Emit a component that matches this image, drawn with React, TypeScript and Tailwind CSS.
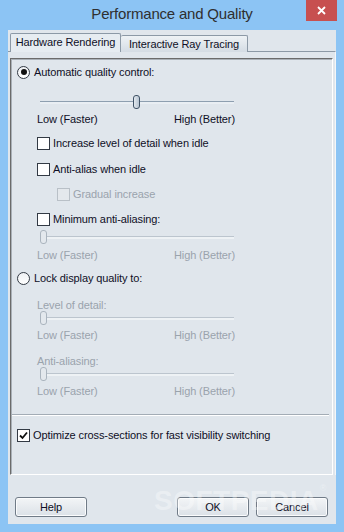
import React from 'react';

const TEXT = 'text-[#0f0f26]';
const DIM = 'text-[#9aa3ac]';

const Radio = ({ checked, label }: { checked?: boolean; label: string }) => (
  <div className="ml-[6px] flex h-[14px] items-center">
    <span className="flex h-[13px] w-[13px] items-center justify-center rounded-full border border-[#333a44] bg-gradient-to-b from-[#eef1f4] to-white">
      {checked && <span className="h-[6px] w-[6px] rounded-full bg-[#111]" />}
    </span>
    <span className={`ml-[4px] ${TEXT}`}>{label}</span>
  </div>
);

const Check = ({
  label,
  checked,
  disabled,
  indent,
}: {
  label: string;
  checked?: boolean;
  disabled?: boolean;
  indent: string;
}) => (
  <div className={`flex h-[14px] items-center ${indent}`}>
    <span
      className={`flex h-[13px] w-[13px] items-center justify-center border ${
        disabled ? 'border-[#b9c0c7] bg-[#e4e8ec]' : 'border-[#333a44] bg-white'
      }`}
    >
      {checked && (
        <svg width="9" height="9" viewBox="0 0 9 9">
          <path d="M1 4.5 L3.5 7 L8 1.5" fill="none" stroke="#111" strokeWidth="1.8" />
        </svg>
      )}
    </span>
    <span className={`ml-[3px] ${disabled ? DIM : TEXT}`}>{label}</span>
  </div>
);

const Slider = ({ pos, disabled }: { pos: number; disabled?: boolean }) => (
  <div className="relative ml-[29px] flex h-[12px] w-[194px] items-center">
    <div
      className={`h-[3px] w-full border-t ${
        disabled ? 'border-[#bcc5ce] bg-[#eef2f5]' : 'border-[#8e9fb0] bg-[#e9eef3]'
      }`}
    />
    <div
      className={`absolute top-[-1px] h-[14px] w-[7px] rounded-[3px] border ${
        disabled
          ? 'border-[#aab4be] bg-[#e3e8ed]'
          : 'border-[#3f5266] bg-gradient-to-r from-[#e2e8ee] to-[#b8c5d2]'
      }`}
      style={{ left: pos }}
    />
  </div>
);

const Scale = ({ disabled, className = '' }: { disabled?: boolean; className?: string }) => (
  <div className={`ml-[26px] flex h-[14px] w-[198px] items-center justify-between ${disabled ? DIM : TEXT} ${className}`}>
    <span>Low (Faster)</span>
    <span>High (Better)</span>
  </div>
);

const Button = ({ children }: { children: React.ReactNode }) => (
  <button className="flex h-[20px] w-[72px] items-center justify-center rounded-[3px] border border-[#707b87] bg-gradient-to-b from-[#f3f5f7] to-[#dbe1e7] text-[#0f0f26] shadow-[inset_0_0_0_1px_#fbfcfd]">
    {children}
  </button>
);

const App = () => {
  return (
    <div className="relative flex h-[532px] w-[344px] flex-col bg-[#8cc4f4] font-['Liberation_Sans',Arial,sans-serif] text-[11px] tracking-[-0.1px]">
      {/* title bar */}
      <div className="relative flex h-[30px] items-center justify-center">
        <span className="pb-[1px] text-[15px] tracking-[-0.2px] text-[#2f2f2f]">Performance and Quality</span>
        <div className="absolute right-[7px] top-0 flex h-[21px] w-[31px] items-center justify-center bg-[#c75050]">
          <svg width="9" height="9" viewBox="0 0 9 9">
            <path d="M1 1 L8 8 M8 1 L1 8" stroke="#fff" strokeWidth="1.8" />
          </svg>
        </div>
      </div>

      {/* client */}
      <div className="mx-[8px] mb-[8px] flex flex-1 flex-col bg-[#e0e6ec] pt-[3px]">
        <div className="relative z-10 -mb-px flex h-[19px] items-end pl-[2px]">
          <div className="flex h-[19px] w-[111px] items-center justify-center rounded-t-[2px] border border-b-0 border-[#8c99a6] bg-[#e6ecf1] pb-[1px] text-[#0f0f26]">
            Hardware Rendering
          </div>
          <div className="flex h-[17px] w-[127px] items-center justify-center rounded-t-[2px] border border-b-0 border-l-0 border-[#8c99a6] bg-gradient-to-b from-[#eef2f5] to-[#d4dce4] text-[#0f0f26]">
            Interactive Ray Tracing
          </div>
        </div>

        <div className="border-t border-r border-t-[#8c99a6] border-r-[#f4f6f8]">
          <div className="mx-[2px] mt-[6px] flex h-[417px] flex-col border-t border-l border-b border-r border-t-[#6b6b6b] border-l-[#6b6b6b] border-b-white border-r-white shadow-[inset_1px_1px_0_#a9b0b7]">
            <div className="mt-[6px]">
              <Radio checked label="Automatic quality control:" />
            </div>
            <div className="mt-[17px]">
              <Slider pos={93} />
            </div>
            <Scale className="mt-[4px]" />
            <div className="mt-[10px]">
              <Check indent="ml-[26px]" label="Increase level of detail when idle" />
            </div>
            <div className="mt-[12px]">
              <Check indent="ml-[26px]" label="Anti-alias when idle" />
            </div>
            <div className="mt-[11px]">
              <Check indent="ml-[46px]" disabled label="Gradual increase" />
            </div>
            <div className="mt-[11px]">
              <Check indent="ml-[26px]" label="Minimum anti-aliasing:" />
            </div>
            <div className="mt-[5px]">
              <Slider pos={0} disabled />
            </div>
            <Scale disabled className="mt-[5px]" />

            <div className="mt-[9px]">
              <Radio label="Lock display quality to:" />
            </div>
            <div className={`ml-[26px] mt-[13px] flex h-[14px] items-center ${DIM}`}>Level of detail:</div>
            <Slider pos={0} disabled />
            <Scale disabled className="mt-[4px]" />
            <div className={`ml-[26px] mt-[12px] flex h-[14px] items-center ${DIM}`}>Anti-aliasing:</div>
            <Slider pos={0} disabled />
            <Scale disabled className="mt-[4px]" />

            <div className="ml-[1px] mt-[16px] w-[317px] border-t border-b border-t-[#a3acb5] border-b-white" />

            <div className="mt-[12px]">
              <Check indent="ml-[6px]" checked label="Optimize cross-sections for fast visibility switching" />
            </div>
          </div>
        </div>

        <div className="mt-[22px] flex items-center justify-between pl-[7px] pr-[8px]">
          <Button>Help</Button>
          <div className="flex gap-[7px]">
            <Button>OK</Button>
            <Button>Cancel</Button>
          </div>
        </div>
      </div>

      {/* watermark */}
      <div className="pointer-events-none absolute left-[154px] top-[480px] flex items-start text-[28px] font-bold tracking-[0.5px] text-white/35">
        SOFTPEDIA
        <span className="ml-[1px] mt-[2px] text-[9px] font-normal">®</span>
      </div>
    </div>
  );
};

export default App;
